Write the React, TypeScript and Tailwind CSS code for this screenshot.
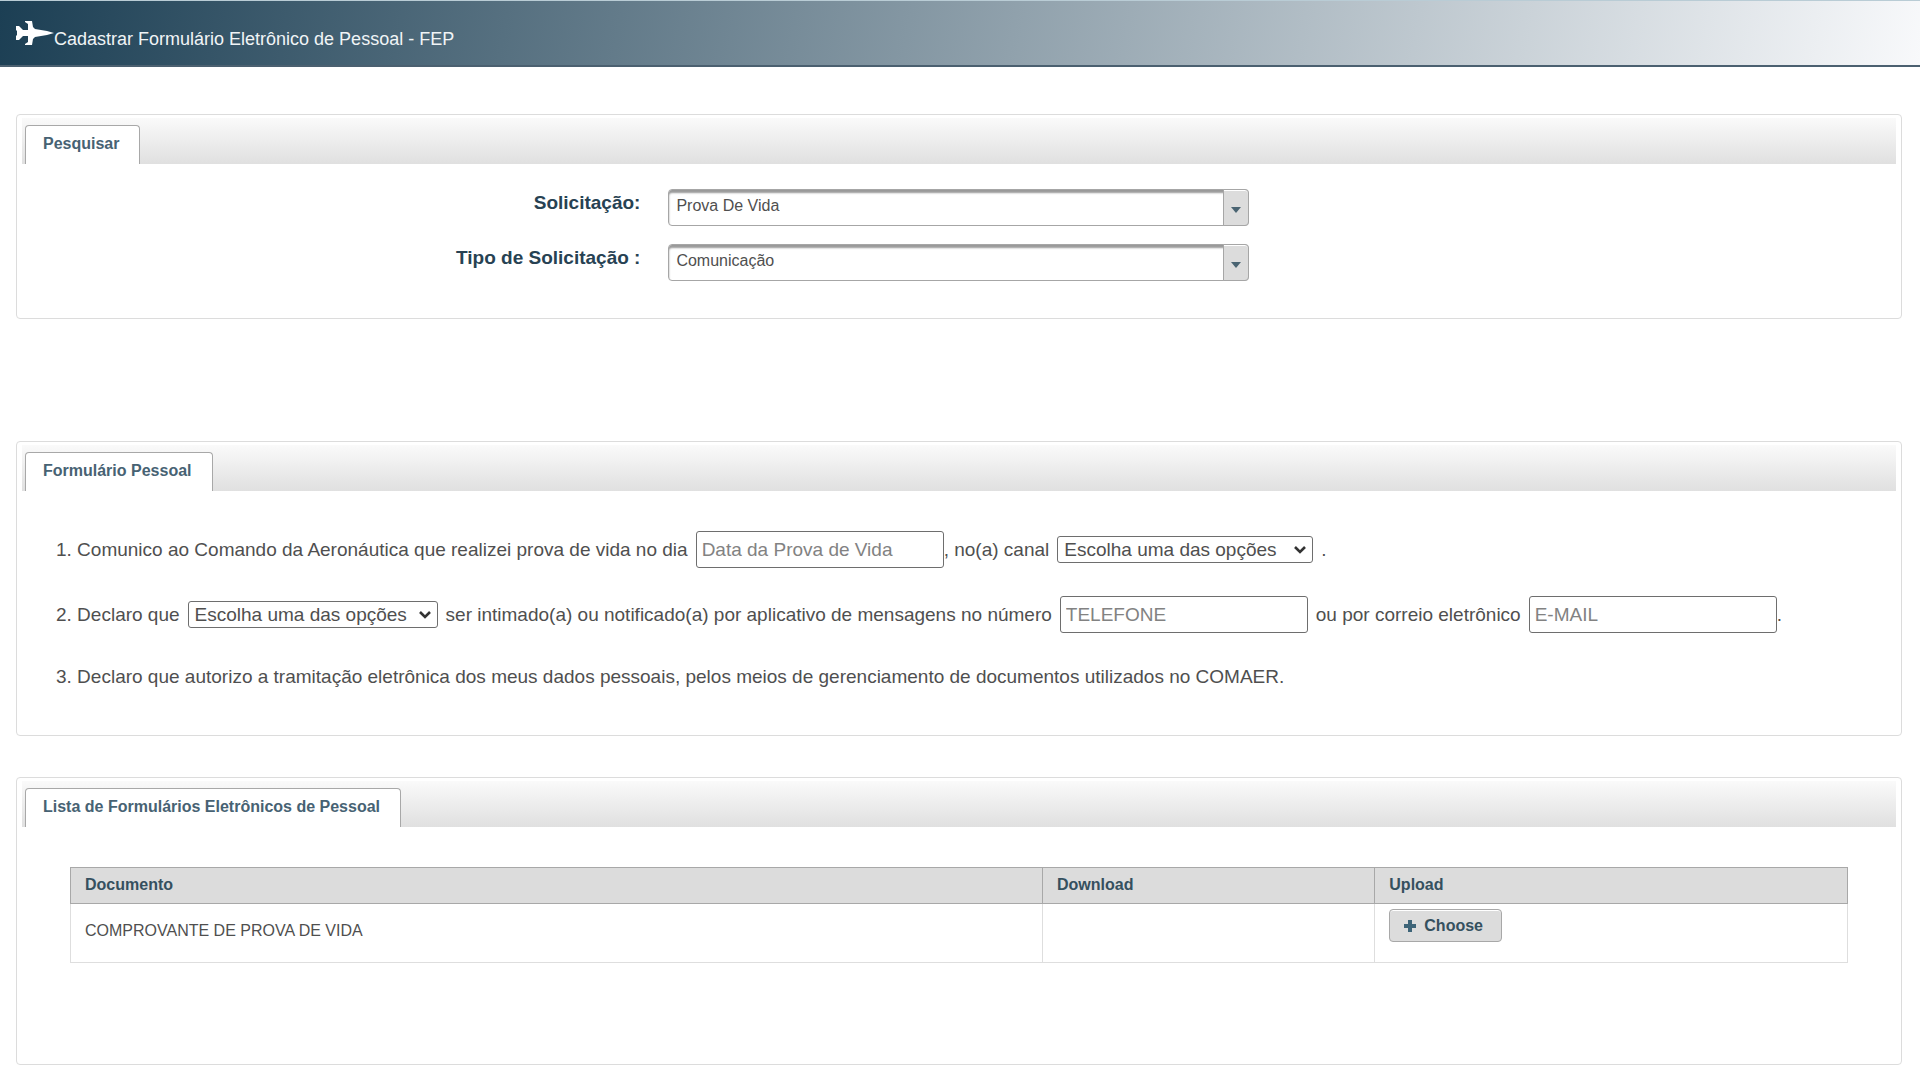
import { useId, type ReactNode } from "react";

const Plane = () => (
  <svg viewBox="0 0 38 24" className="h-6 w-[38px] shrink-0 fill-white" aria-hidden="true">
    <path d="M0 5 L3 5 L7 9 L12 9 L12 3 L9 1 L9 0 L16 0 L17 6 L19 8 L25 9 L31 10 L38 12 L31 14 L25 15 L19 16 L17 18 L16 24 L9 24 L9 23 L12 21 L12 15 L7 15 L3 19 L0 19 L0 15 L1 14 L1 10 L0 9 Z" />
  </svg>
);

type PanelProps = { title: string; children: ReactNode; className?: string };

const Panel = ({ title, children, className = "" }: PanelProps) => (
  <section
    className={`rounded-[4px] border border-[#dcdcdc] bg-white px-[5px] py-[3px] ${className}`}
  >
    <div className="flex h-[46px] items-end bg-linear-to-b from-[#fafafa] to-[#e0e0e0] px-[3px]">
      <h2 className="h-[39px] rounded-t-[4px] border border-b-0 border-[#a8a8a8] bg-white pt-1 pr-5 pl-[17px] text-[16px] leading-7 font-bold text-[#476273]">
        {title}
      </h2>
    </div>
    {children}
  </section>
);

const SearchRow = ({ label, value }: { label: string; value: string }) => {
  const id = useId();
  return (
    <div className="flex">
      <label
        htmlFor={id}
        className="w-[33%] text-right text-[19px] leading-7 font-bold text-[#274253]"
      >
        {label}
      </label>
      <div className="relative ml-7 h-[37px] w-[31%]">
        <select
          id={id}
          className="h-full w-full appearance-none rounded-[4px] border border-[#a6a6a6] bg-white pr-8 pb-1 pl-[7px] text-[16px] text-[#4f4f4f] shadow-[inset_0_3px_2px_#999]"
        >
          <option>{value}</option>
        </select>
        <span className="pointer-events-none absolute inset-y-0 right-0 flex w-[26px] items-center justify-center rounded-r-[4px] border border-[#a6a6a6] bg-[#dcdcdc] pt-1 shadow-[inset_0_1px_0_#fff]">
          <svg viewBox="0 0 10 6" className="h-[6px] w-[10px] fill-[#4a6472]" aria-hidden="true">
            <path d="M0 0h10L5 6z" />
          </svg>
        </span>
      </div>
    </div>
  );
};

const OptionSelect = ({ label, className = "" }: { label: string; className?: string }) => (
  <span className={`relative inline-flex h-[27px] ${className}`}>
    <select
      aria-label={label}
      className="w-full appearance-none rounded-[3px] border border-[#6e6e6e] bg-white pr-6 pl-[6px] leading-6"
    >
      <option>Escolha uma das opções</option>
    </select>
    <svg
      viewBox="0 0 12 8"
      className="pointer-events-none absolute top-[10px] right-[7px] h-2 w-3 fill-none stroke-[#333] stroke-[2.6]"
      aria-hidden="true"
    >
      <path d="M1 1l5 5 5-5" />
    </svg>
  </span>
);

const Field = ({ label, type = "text" }: { label: string; type?: string }) => (
  <input
    type={type}
    aria-label={label}
    placeholder={label}
    className="h-[37px] w-[248px] rounded-[3px] border border-[#6e6e6e] bg-white px-[5px] placeholder:text-[#828282]"
  />
);

const App = () => (
  <div className="min-h-screen bg-white font-['Liberation_Sans',Arial,sans-serif] text-[#4f4f4f]">
    <header className="flex h-[67px] items-center border-t border-b-2 border-t-[#b9ccd5] border-b-[#4b6070] bg-linear-[100deg] from-[#1c3f54] to-[#f8f9fb] px-4">
      <Plane />
      <h1 className="pt-3 text-[18px] leading-6 text-[#f0f4f6]">
        Cadastrar Formulário Eletrônico de Pessoal - FEP
      </h1>
    </header>

    <main className="mt-[47px] mr-[18px] ml-4">
      <Panel title="Pesquisar">
        <form className="flex flex-col gap-[18px] pt-[25px] pb-[34px]">
          <SearchRow label="Solicitação:" value="Prova De Vida" />
          <SearchRow label="Tipo de Solicitação :" value="Comunicação" />
        </form>
      </Panel>

      <Panel title="Formulário Pessoal" className="mt-[122px]">
        <form className="px-[34px] pt-10 pb-[43px] text-[19px] leading-6">
          <p className="flex flex-wrap items-center gap-x-2">
            1. Comunico ao Comando da Aeronáutica que realizei prova de vida no dia
            <span>
              <Field label="Data da Prova de Vida" />, no(a) canal
            </span>
            <OptionSelect label="Canal" className="w-64" />
            <span>.</span>
          </p>
          <p className="mt-7 flex flex-wrap items-center gap-x-2">
            2. Declaro que
            <OptionSelect label="Declaração" className="w-[250px]" />
            ser intimado(a) ou notificado(a) por aplicativo de mensagens no número
            <Field label="TELEFONE" type="tel" />
            ou por correio eletrônico
            <span>
              <Field label="E-MAIL" type="email" />.
            </span>
          </p>
          <p className="mt-8">
            3. Declaro que autorizo a tramitação eletrônica dos meus dados pessoais, pelos meios de
            gerenciamento de documentos utilizados no COMAER.
          </p>
        </form>
      </Panel>

      <Panel title="Lista de Formulários Eletrônicos de Pessoal" className="mt-[41px]">
        <div className="px-12 pt-10 pb-[98px]">
          <table className="w-full table-fixed border-collapse text-left text-[16px]">
            <colgroup>
              <col className="w-[54.7%]" />
              <col className="w-[18.7%]" />
              <col />
            </colgroup>
            <thead>
              <tr className="h-9 bg-[#dcdcdc] text-[#35505f]">
                <th className="border border-[#a8a8a8] px-[14px] pb-[2px]">Documento</th>
                <th className="border border-[#a8a8a8] px-[14px] pb-[2px]">Download</th>
                <th className="border border-[#a8a8a8] px-[14px] pb-[2px]">Upload</th>
              </tr>
            </thead>
            <tbody>
              <tr className="h-[59px]">
                <td className="border border-[#dedede] px-[14px] pb-1">
                  COMPROVANTE DE PROVA DE VIDA
                </td>
                <td className="border border-[#dedede]" />
                <td className="border border-[#dedede] px-[14px] pt-[5px] align-top">
                  <button
                    type="button"
                    className="flex h-[33px] w-[113px] items-center gap-2 rounded-[4px] border border-[#a8a8a8] bg-[#dcdcdc] pl-[14px] font-bold text-[#35505f] shadow-[inset_0_1px_0_#fff]"
                  >
                    <svg viewBox="0 0 12 12" className="h-3 w-3 fill-[#3d6478]" aria-hidden="true">
                      <path d="M4 0h4v4h4v4H8v4H4V8H0V4h4z" />
                    </svg>
                    Choose
                  </button>
                </td>
              </tr>
            </tbody>
          </table>
        </div>
      </Panel>
    </main>
  </div>
);

export default App;
